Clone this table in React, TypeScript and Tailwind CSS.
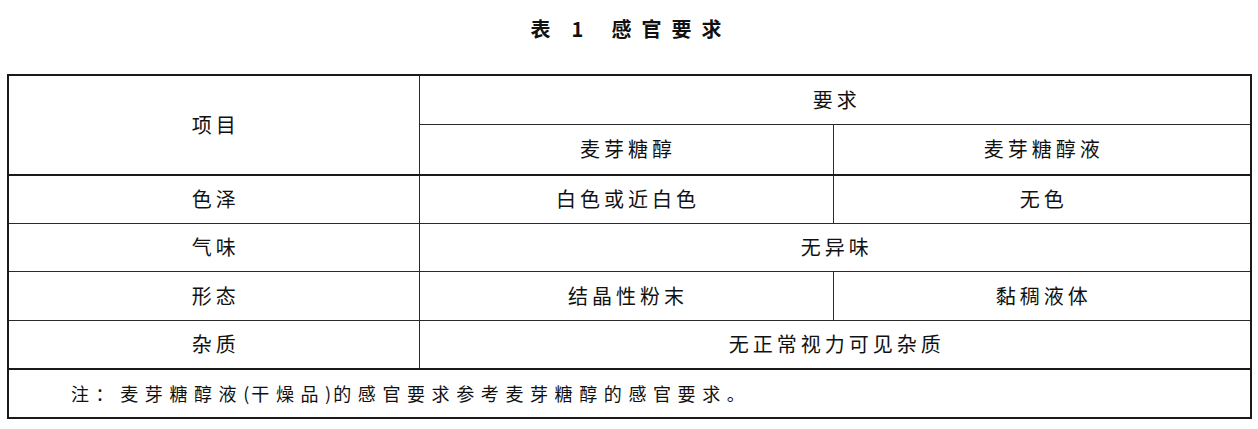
const font = { fontFamily: '"Noto Sans CJK SC", "Noto Sans", sans-serif' };

const rows = [
  { item: "色泽", a: "白色或近白色", b: "无色", h: "h-[48px]" },
  { item: "气味", all: "无异味", h: "h-[48px]" },
  { item: "形态", a: "结晶性粉末", b: "黏稠液体", h: "h-[49px]" },
  { item: "杂质", all: "无正常视力可见杂质", h: "h-[49px]" },
];

const cell = "border border-[#2a2a2a] text-center align-middle text-[20px] tracking-[4px] pl-[4px] font-normal";

export default function App() {
  return (
    <div className="w-[1258px] h-[429px] bg-white text-[#111] pt-[17px]" style={font}>
      {/* 标题 */}
      <h1 className="flex justify-center items-center h-[24px] text-[20px] font-bold leading-none pl-[4px]">
        <span>表</span>
        <span className="ml-[21px]">1</span>
        <span className="ml-[28px] tracking-[10px]">感官要求</span>
      </h1>

      <table className="ml-[7px] mt-[33px] w-[1243px] table-fixed border-collapse border-2 border-[#1a1a1a]">
        <colgroup>
          <col className="w-[411px]" />
          <col className="w-[414px]" />
          <col className="w-[418px]" />
        </colgroup>
        <tbody>
          <tr className="h-[49px]">
            <td rowSpan={2} className={cell + " border-b-2 border-b-[#1a1a1a]"}>项目</td>
            <td colSpan={2} className={cell}>要求</td>
          </tr>
          <tr className="h-[51px]">
            <td className={cell + " border-b-2 border-b-[#1a1a1a]"}>麦芽糖醇</td>
            <td className={cell + " border-b-2 border-b-[#1a1a1a]"}>麦芽糖醇液</td>
          </tr>
          {rows.map((r) => (
            <tr key={r.item} className={r.h}>
              <td className={cell}>{r.item}</td>
              {r.all ? (
                <td colSpan={2} className={cell}>{r.all}</td>
              ) : (
                <>
                  <td className={cell}>{r.a}</td>
                  <td className={cell}>{r.b}</td>
                </>
              )}
            </tr>
          ))}
          <tr className="h-[49px]">
            <td colSpan={3} className="border-t-2 border-t-[#1a1a1a] text-left align-middle text-[18px] tracking-[6.6px] pl-[62px] font-normal">
              注：麦芽糖醇液<span className="tracking-[2px]">(</span>干燥品<span className="tracking-[2px]">)</span>的感官要求参考麦芽糖醇的感官要求。
            </td>
          </tr>
        </tbody>
      </table>
    </div>
  );
}
